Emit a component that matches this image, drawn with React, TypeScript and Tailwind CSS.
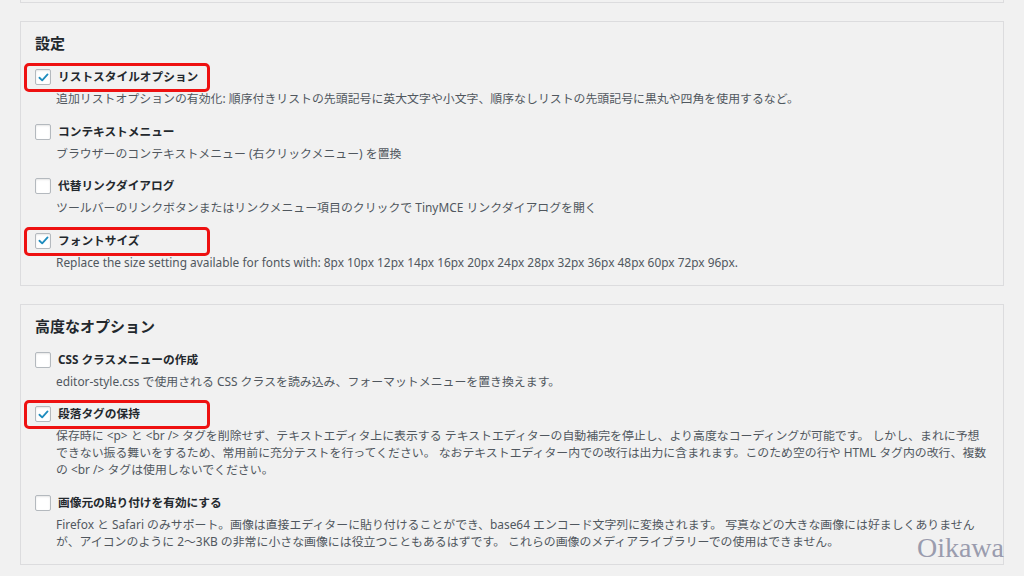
import React from "react";

type Item = {
  label: string;
  checked: boolean;
  marked?: boolean;
  desc: string[];
};

const basicItems: Item[] = [
  {
    label: "リストスタイルオプション",
    checked: true,
    marked: true,
    desc: [
      "追加リストオプションの有効化: 順序付きリストの先頭記号に英大文字や小文字、順序なしリストの先頭記号に黒丸や四角を使用するなど。",
    ],
  },
  {
    label: "コンテキストメニュー",
    checked: false,
    desc: ["ブラウザーのコンテキストメニュー (右クリックメニュー) を置換"],
  },
  {
    label: "代替リンクダイアログ",
    checked: false,
    desc: ["ツールバーのリンクボタンまたはリンクメニュー項目のクリックで TinyMCE リンクダイアログを開く"],
  },
  {
    label: "フォントサイズ",
    checked: true,
    marked: true,
    desc: [
      "Replace the size setting available for fonts with: 8px 10px 12px 14px 16px 20px 24px 28px 32px 36px 48px 60px 72px 96px.",
    ],
  },
];

const advancedItems: Item[] = [
  {
    label: "CSS クラスメニューの作成",
    checked: false,
    desc: ["editor-style.css で使用される CSS クラスを読み込み、フォーマットメニューを置き換えます。"],
  },
  {
    label: "段落タグの保持",
    checked: true,
    marked: true,
    desc: [
      "保存時に <p> と <br /> タグを削除せず、テキストエディタ上に表示する テキストエディターの自動補完を停止し、より高度なコーディングが可能です。 しかし、まれに予想",
      "できない振る舞いをするため、常用前に充分テストを行ってください。 なおテキストエディター内での改行は出力に含まれます。このため空の行や HTML タグ内の改行、複数",
      "の <br /> タグは使用しないでください。",
    ],
  },
  {
    label: "画像元の貼り付けを有効にする",
    checked: false,
    desc: [
      "Firefox と Safari のみサポート。画像は直接エディターに貼り付けることができ、base64 エンコード文字列に変換されます。 写真などの大きな画像には好ましくありません",
      "が、アイコンのように 2〜3KB の非常に小さな画像には役立つこともあるはずです。 これらの画像のメディアライブラリーでの使用はできません。",
    ],
  },
];

function Checkbox({ checked }: { checked: boolean }) {
  return (
    <span className="flex h-[16px] w-[16px] shrink-0 items-center justify-center rounded-[2px] border border-[#b4b9be] bg-white shadow-[inset_0_1px_2px_rgba(0,0,0,0.1)]">
      {checked && (
        <svg viewBox="0 0 16 16" className="h-[13px] w-[13px]">
          <path d="M3 8.3 L6.4 11.6 L13 4.2" fill="none" stroke="#1e8cbe" strokeWidth="2.2" strokeLinecap="round" strokeLinejoin="round" />
        </svg>
      )}
    </span>
  );
}

function Option({ item }: { item: Item }) {
  return (
    <div className="flex flex-col">
      <div className="relative flex h-[22px] items-center gap-[7px]">
        {item.marked && (
          <span className="pointer-events-none absolute left-[-11px] top-[-3px] h-[29px] w-[186px] rounded-[5px] border-[3px] border-[#ee1111]" />
        )}
        <Checkbox checked={item.checked} />
        <span className="text-[11.7px] font-bold text-[#23282d]">{item.label}</span>
      </div>
      <div className="mt-[2px] whitespace-nowrap pl-[21px] text-[11.9px] leading-[17px] text-[#50575e]">
        {item.desc.map((line, i) => (
          <div key={i}>{line}</div>
        ))}
      </div>
    </div>
  );
}

function Panel({ title, items }: { title: string; items: Item[] }) {
  return (
    <section className="border border-[#dcdcde] bg-[#f1f1f1] pl-[14px] pr-[12px] pt-[11px] pb-[14px]">
      <h2 className="text-[15px] font-semibold leading-[20px] text-[#23282d]">{title}</h2>
      <div className="mt-[13px] flex flex-col gap-[13.5px]">
        {items.map((item) => (
          <Option key={item.label} item={item} />
        ))}
      </div>
    </section>
  );
}

export default function App() {
  return (
    <div
      className="relative h-[576px] w-[1024px] overflow-hidden bg-[#f1f1f1] px-[20px]"
      style={{ fontFamily: '"Noto Sans", "Noto Sans CJK JP", sans-serif' }}
    >
      <div className="h-[3px] border-x border-b border-[#dcdcde]" />
      <div className="mt-[18px] flex flex-col gap-[18px]">
        <Panel title="設定" items={basicItems} />
        <Panel title="高度なオプション" items={advancedItems} />
      </div>
      <span
        className="absolute bottom-[14px] right-[20px] text-[28px] leading-none text-[#9a9cae]"
        style={{ fontFamily: '"Liberation Serif", serif' }}
      >
        Oikawa
      </span>
    </div>
  );
}
